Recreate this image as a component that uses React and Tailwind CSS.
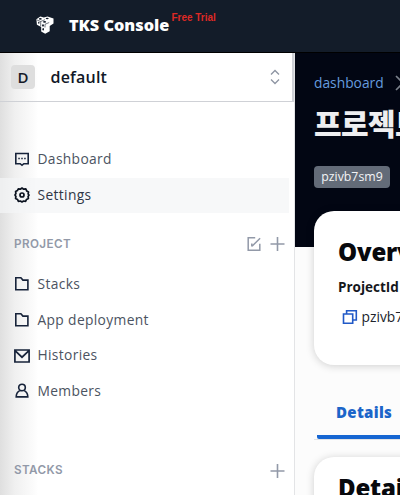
function Icon({ children, className = "", size = 16, sw = 1.8 }) {
  return (
    <svg width={size} height={size} viewBox="0 0 16 16" fill="none" stroke="currentColor" strokeWidth={sw} className={"shrink-0 " + className}>
      {children}
    </svg>
  );
}

const DashboardIcon = () => (
  <Icon className="text-[#17233a]" sw={1.6}>
    <path d="M1.800 1.500h12.400v10.200H9.800L8 13.300l-1.800-1.600H1.800z" />
    <path d="M4.300 6.500h1.500M7.250 6.500h1.500M10.200 6.500h1.500" />
  </Icon>
);

const GearIcon = () => (
  <Icon className="text-[#0c1320]" sw={1.7}>
    <path d="M6.300 2.200 8 1l1.700 1.200 2.100-.3.900 2 1.800 1.100-.4 2L15 8l-.9 1.500.3 1.900-1.900 1-.9 1.900-2-.3L8 15l-1.600-1-2 .3-.9-1.900-1.900-1 .3-1.900L1 8l.9-1.500-.3-1.900 1.800-1 .9-1.700z" strokeLinejoin="round" />
    <circle cx="8" cy="8" r="2" />
  </Icon>
);

const FolderIcon = () => (
  <Icon className="text-[#17233a]" sw={1.600}>
    <path d="M1.800 1.800h5.100l2 2.300h5v9.700H1.800z" />
  </Icon>
);

const MailIcon = () => (
  <Icon className="text-[#17233a]" sw={1.700}>
    <path d="M.9 2h14.200v12H.9zM1.300 2.800l6.700 6.400L14.700 2.800" />
  </Icon>
);

const UserIcon = () => (
  <Icon className="text-[#17233a]" sw={1.600}>
    <circle cx="8" cy="4.500" r="3.300" />
    <path d="M5.700 7.600C3.300 8.800 2.200 11 2.200 13.900h11.600c0-2.900-1.100-5.100-3.500-6.300" />
  </Icon>
);

const PlusIcon = () => (
  <Icon sw={1.600}>
    <path d="M8.500 1v14M1.500 8h14" />
  </Icon>
);

const EditIcon = () => (
  <Icon sw={1.500}>
    <path d="M9.200 1.800H2.200v12.400h11.600V7.800" />
    <path d="m6 10.300 8.100-8.100M5.800 7.600v2.900" />
  </Icon>
);

function Logo() {
  return (
    <svg width="18" height="18" viewBox="0 0 18 18" className="shrink-0">
      <path d="M.4 3.200 4.300.6l3.600 1L11.500.4l6 2.100v5L13.700 10v5.200l-4.500 2.500-4-2.200V11L.9 8.700z" fill="#fff" />
      <path d="M1 4l3.700 1.500L9 3.700M4.700 5.500v4.800M9 8.300l4.200-1.800M9 8.300v3.200" stroke="#111a28" strokeWidth=".6" fill="none" />
      <g fill="#131c29">
        <ellipse cx="4.300" cy="2.900" rx="1.500" ry=".8" />
        <ellipse cx="11.200" cy="2.500" rx="1.500" ry=".7" />
        <ellipse cx="8.600" cy="5.900" rx="1.600" ry=".8" />
        <ellipse cx="2.800" cy="6.800" rx=".7" ry="1" />
        <ellipse cx="7" cy="9.400" rx=".9" ry="1.200" />
        <ellipse cx="7.200" cy="13.300" rx=".8" ry="1.200" />
      </g>
    </svg>
  );
}

function NavItem({ icon, label, active }) {
  return (
    <div className={"flex h-[35.6px] items-center gap-[8px] pl-[13.500px] text-[13.800px] tracking-[0.35px] " + (active ? "mr-[5px] bg-[#f3f5f7]/70 text-[#303746]" : "text-[#4b5361]")}>
      {icon}
      <span>{label}</span>
    </div>
  );
}

function SectionHeader({ label, children }) {
  return (
    <div className="flex h-[36px] items-center justify-between pl-[14px] pr-[9px] font-['Inter',sans-serif] text-[11.700px] font-semibold tracking-[0.4px] text-[#9299a8]">
      <span className="pt-px">{label}</span>
      <div className="flex items-center gap-[7px]">{children}</div>
    </div>
  );
}

function Sidebar() {
  return (
    <aside className="h-[442px] w-[295px] shrink-0 overflow-hidden border-r border-[#e3e4e6] bg-[linear-gradient(90deg,#dfdfdf_0px,#f0f0f0_15px,#fbfbfb_33px,#fff_38px)]">
      <div className="flex h-[49px] items-center border-b border-r-2 border-[#cfd1d6] pl-[11px] pr-[12px]">
        <div className="flex size-[24px] items-center justify-center rounded-[4px] bg-[#dedede] text-[15px] font-semibold text-[#151b28]">D</div>
        <div className="ml-[15.500px] flex-1 text-[16px] font-semibold tracking-[0.2px] text-[#111827]">default</div>
        <svg width="10" height="16" viewBox="0 0 10 16" fill="none" stroke="#8d94a2" strokeWidth="1.3">
          <path d="M1 5.500 5 1.500l4 4M1 10.500l4 4 4-4" />
        </svg>
      </div>
      <nav className="mt-[40px]">
        <NavItem icon={<DashboardIcon />} label="Dashboard" />
        <NavItem icon={<GearIcon />} label="Settings" active />
      </nav>
      <div className="mt-[13px]">
        <SectionHeader label="PROJECT">
          <EditIcon />
          <PlusIcon />
        </SectionHeader>
      </div>
      <nav className="mt-[4.500px]">
        <NavItem icon={<FolderIcon />} label="Stacks" />
        <NavItem icon={<FolderIcon />} label="App deployment" />
        <NavItem icon={<MailIcon />} label="Histories" />
        <NavItem icon={<UserIcon />} label="Members" />
      </nav>
      <div className="mt-[43.500px]">
        <SectionHeader label="STACKS">
          <PlusIcon />
        </SectionHeader>
      </div>
    </aside>
  );
}

function Main() {
  return (
    <main className="h-[442px] w-[105px] overflow-hidden bg-[linear-gradient(180deg,#020613_0px,#020613_194px,#fcfcfc_194px)] pl-[19px]">
      <div className="w-[300px] pt-[18px]">
        <div className="flex h-[24px] items-center text-[13.800px] text-[#659bdf]">
          <span>dashboard</span>
          <svg width="9" height="16" viewBox="0 0 9 16" fill="none" stroke="#7b818b" strokeWidth="1.600" className="ml-[11px]">
            <path d="m1 1 7 7-7 7" />
          </svg>
        </div>
        <h1 className="mt-[9px] h-[36px] whitespace-nowrap font-['Noto_Sans_CJK_KR',sans-serif] text-[30px] font-black leading-[36px] tracking-[-0.600px] text-[#eeeef0]">프로젝트</h1>
        <div className="mt-[26px] flex h-[22px] w-[76px] items-center justify-center rounded-[4px] bg-[#636b78] text-[12.300px] text-[#f3f4f6]">pzivb7sm9</div>
        <section className="mt-[23px] h-[154px] rounded-[20px] bg-white pl-[24px] pt-[24px] shadow-[0_1px_8px_rgba(0,0,0,0.18)]">
          <h2 className="text-[24px] font-extrabold leading-[34px] tracking-[-0.2px] text-[#08090d]">Overview</h2>
          <div className="mt-[8px] text-[13.500px] font-bold leading-[20px] text-[#15171c]">ProjectId</div>
          <div className="mt-[9px] flex h-[22px] items-center gap-[3.500px] pl-[4px] text-[13.800px] text-[#20242c]">
            <Icon className="text-[#2159c7]" sw={1.600}>
              <path d="M1.500 5h9.200v9.200H1.500zM4.600 5V1.700h9.700V11h-3.600" />
            </Icon>
            <span>pzivb7sm9</span>
          </div>
        </section>
        <div className="mt-[34px] h-[41px] border-b border-[#e2e3e5] pl-[3px]">
          <div className="h-[40px] rounded-l-[2px] border-b-[4px] border-[#1666d2] pl-[19px] text-[15px] font-extrabold leading-[27px] tracking-[0.3px] text-[#1b65c9]">Details</div>
        </div>
        <section className="mt-[17px] h-[100px] rounded-[20px] bg-white pl-[24px] pt-[14px] shadow-[0_1px_8px_rgba(0,0,0,0.18)]">
          <h2 className="text-[24px] font-extrabold leading-[34px] tracking-[-0.2px] text-[#08090d]">Details</h2>
        </section>
      </div>
    </main>
  );
}

export default function App() {
  return (
    <div className="h-[495px] w-[400px] overflow-hidden bg-white font-['Open_Sans','Noto_Sans_CJK_KR',sans-serif]">
      <header className="flex h-[53px] items-center border-b border-black bg-[#131c29] pl-[36px] pb-[2px]">
        <Logo />
        <div className="ml-[15px] text-[16.300px] font-extrabold text-white">TKS Console</div>
        <div className="mb-[15px] ml-[2px] font-['Liberation_Sans',sans-serif] text-[10px] font-bold text-[#de2925]">Free Trial</div>
      </header>
      <div className="flex">
        <Sidebar />
        <Main />
      </div>
    </div>
  );
}
